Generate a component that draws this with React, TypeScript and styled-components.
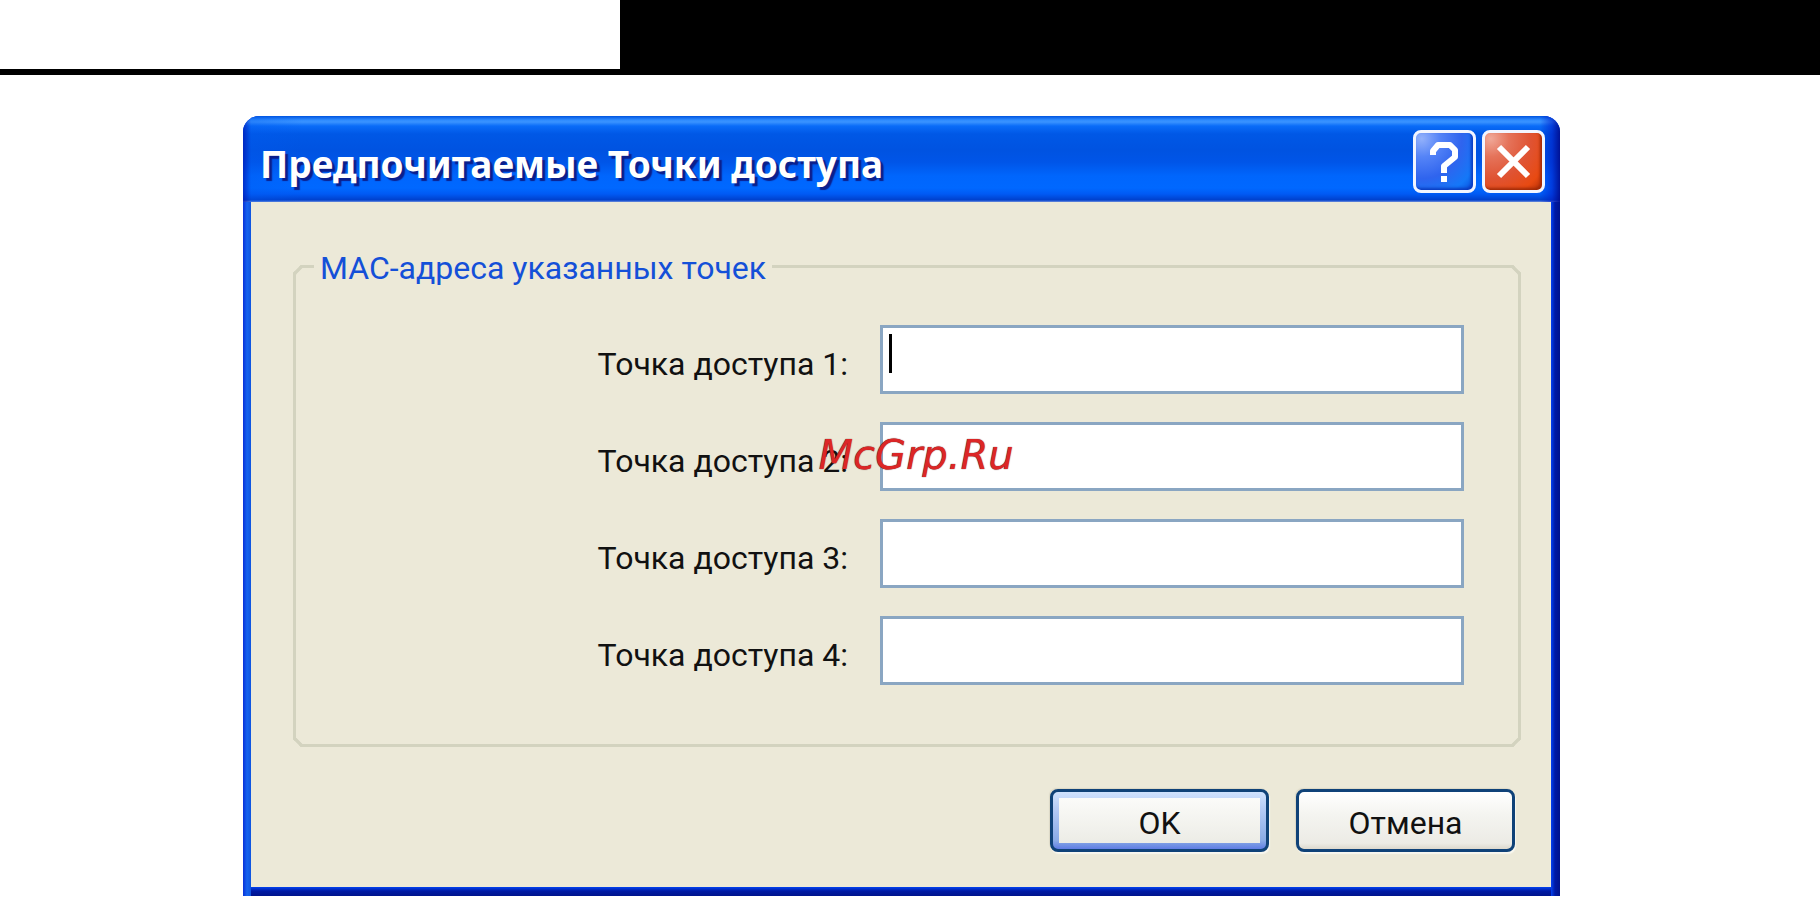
import React from 'react';
import styled, { createGlobalStyle } from 'styled-components';

const GlobalStyle = createGlobalStyle`
  * { box-sizing: border-box; }
  body {
    margin: 0;
    background: #fff;
    font-family: Roboto, "Liberation Sans", sans-serif;
    font-size: 32px;
    line-height: 40px;
    color: #111;
  }
`;

const Page = styled.div`
  position: relative;
  min-height: 100vh;
`;

const Banner = styled.header`
  display: grid;
  grid-template-columns: 620fr 1200fr;
  height: 75px;
  border-bottom: 6px solid #000;
`;

const BannerFill = styled.div`
  grid-column: 2;
  background: #000;
`;

const Main = styled.main`
  padding: 41px 260px 10px 243px;
`;

const Dialog = styled.section`
  border-radius: 16px 16px 0 0;
  overflow: hidden;
  background: #0831d9;
`;

const TitleBar = styled.div`
  display: flex;
  align-items: center;
  gap: 6px;
  height: 86px;
  padding: 4px 15px 0 17px;
  background:
    linear-gradient(90deg, rgba(0, 20, 180, 0.7) 0, rgba(0, 90, 240, 0.3) 8px, transparent 60px),
    linear-gradient(270deg, rgba(0, 10, 140, 0.9) 0, rgba(0, 30, 200, 0.6) 8px, transparent 20px),
    linear-gradient(180deg, #0054e0 0, #2f8cff 4px, #3a93ff 6px, #0a6cf8 10px, #0058e6 18px, #0053e1 34px,
      #0055e8 46px, #0066fd 60px, #0068ff 72px, #005af4 78px, #0040cc 84px, #6f8fdc 86px);
`;

const Title = styled.h1`
  flex: 1;
  margin: 0;
  padding-top: 6px;
  font-family: "Noto Sans", "Open Sans", sans-serif;
  font-size: 37px;
  line-height: 48px;
  font-weight: 700;
  white-space: nowrap;
  color: #fff;
  text-shadow: 3px 3px 1px #0b1f8c;
`;

const CaptionButton = styled.button<{ $kind: 'help' | 'close' }>`
  display: flex;
  align-items: center;
  justify-content: center;
  width: 63px;
  height: 63px;
  padding: 0;
  border: 3px solid #f2f5ff;
  border-radius: 8px;
  color: #fff;
  background: ${(p) =>
    p.$kind === 'help'
      ? 'radial-gradient(circle at 10% 10%, #93b1fb 0, #5584f7 25%, #2f64ee 55%, #1478f8 82%, #0a50dc 100%)'
      : 'radial-gradient(circle at 10% 10%, #f0a898 0, #e5735a 25%, #df5333 55%, #e84a12 82%, #b53008 100%)'};
  box-shadow: inset -2px -2px 3px ${(p) => (p.$kind === 'help' ? '#0a3bc0' : '#a02a08')};
`;

const Glyph = styled.svg`
  width: 57px;
  height: 57px;
  fill: none;
  stroke: currentColor;
`;

const Frame = styled.div`
  background: linear-gradient(90deg, #0831d9 0, #1663ee 4px, #0f55e0 8px, transparent 8px),
    linear-gradient(270deg, #00138c 0, #001aa5 5px, #0342f0 9px, transparent 9px),
    linear-gradient(0deg, #00138c 0, #001aa5 5px, #0342f0 9px);
  padding: 0 9px 9px 8px;
`;

const Body = styled.form`
  padding: 42px 30px 35px 42px;
  background: #ece9d8;
`;

const Group = styled.fieldset`
  min-width: 0;
  margin: 0;
  padding: 37px 54px 59px 0;
  border: 3px solid #d3d3bf;
  border-radius: 8px;
  corner-shape: bevel;
`;

const Legend = styled.legend`
  margin-left: 18px;
  padding: 4px 6px 0;
  color: #1450d8;
`;

const Rows = styled.div`
  display: grid;
  gap: 28px;
`;

const Row = styled.div`
  display: grid;
  grid-template-columns: 1fr 584px;
  column-gap: 32px;
  align-items: center;
`;

const Label = styled.label`
  padding-top: 8px;
  text-align: right;
  white-space: nowrap;
`;

const Field = styled.div<{ $caret?: boolean }>`
  position: relative;
  display: flex;
  &::before {
    content: '';
    display: ${(p) => (p.$caret ? 'block' : 'none')};
    position: absolute;
    left: 9px;
    top: 9px;
    width: 3px;
    height: 39px;
    background: #000;
  }
`;

const TextInput = styled.input`
  width: 100%;
  height: 69px;
  padding: 0 8px;
  border: 3px solid #8aa6c2;
  border-radius: 0;
  background: #fff;
  font: inherit;
  color: inherit;
  outline: none;
`;

const Actions = styled.div`
  display: flex;
  justify-content: flex-end;
  gap: 27px;
  padding: 42px 6px 0 0;
`;

const ActionButton = styled.button<{ $primary?: boolean }>`
  width: 219px;
  height: 63px;
  padding: 4px 0 0;
  border: 3px solid #0f4278;
  border-radius: 8px;
  font: inherit;
  color: inherit;
  background: linear-gradient(#fff, #f4f4f0 40%, #ecebe5 90%, #dcd8cd);
  ${(p) =>
    p.$primary &&
    `
    background:
      linear-gradient(#fbfbf9, #ecece6) 6px 6px / calc(100% - 12px) calc(100% - 12px) no-repeat,
      linear-gradient(#cfe2fd, #b5cbf5 30%, #8aabe6 85%, #5f7de4);
  `}
  box-shadow: 1px 2px 1px #f8f7f0, -1px -1px 1px #dcd8c6;
`;

const Watermark = styled.div`
  position: absolute;
  inset: 0;
  display: flex;
  align-items: center;
  justify-content: center;
  padding: 4px 0 0 12px;
  pointer-events: none;
  font-family: "DejaVu Sans", sans-serif;
  font-size: 40px;
  font-style: italic;
  color: #dc2626;
  text-shadow: 0 0 1px #400;
`;

const points = [1, 2, 3, 4];

export default function App() {
  return (
    <Page>
      <GlobalStyle />
      <Banner>
        <BannerFill />
      </Banner>
      <Main>
        <Dialog role="dialog" aria-labelledby="dialog-title">
          <TitleBar>
            <Title id="dialog-title">Предпочитаемые Точки доступа</Title>
            <CaptionButton type="button" $kind="help" aria-label="Справка">
              <Glyph viewBox="0 0 57 57" aria-hidden="true">
                <path d="M17 22 V18 L22 12 H34 L39 17 V24 L28 33 V40" strokeWidth="6" strokeLinejoin="round" />
                <path d="M25 46 H31" strokeWidth="6" />
              </Glyph>
            </CaptionButton>
            <CaptionButton type="button" $kind="close" aria-label="Закрыть">
              <Glyph viewBox="0 0 57 57" aria-hidden="true">
                <path d="M14 14 L43 43 M43 14 L14 43" strokeWidth="6" />
              </Glyph>
            </CaptionButton>
          </TitleBar>
          <Frame>
            <Body onSubmit={(e) => e.preventDefault()}>
              <Group>
                <Legend>MAC-адреса указанных точек</Legend>
                <Rows>
                  {points.map((n) => (
                    <Row key={n}>
                      <Label htmlFor={`point-${n}`}>Точка доступа {n}:</Label>
                      <Field $caret={n === 1}>
                        <TextInput id={`point-${n}`} type="text" />
                      </Field>
                    </Row>
                  ))}
                </Rows>
              </Group>
              <Actions>
                <ActionButton type="submit" $primary>
                  OK
                </ActionButton>
                <ActionButton type="button">Отмена</ActionButton>
              </Actions>
            </Body>
          </Frame>
        </Dialog>
      </Main>
      <Watermark>McGrp.Ru</Watermark>
    </Page>
  );
}
